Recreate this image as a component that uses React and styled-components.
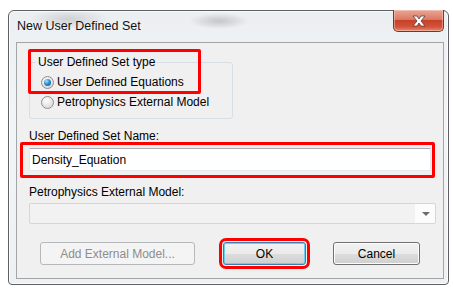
import styled, { createGlobalStyle } from "styled-components";

const GlobalStyle = createGlobalStyle`
  html, body {
    margin: 0;
    background: #ffffff;
    font-family: "Liberation Sans", Arial, sans-serif;
    font-size: 12px;
    color: #000;
  }
`;

const Page = styled.div`
  padding: 10px 0 0 8px;
`;

const Window = styled.div`
  width: 441px;
  height: 275px;
  box-sizing: border-box;
  border: 1px solid #5c5f63;
  border-radius: 6px 6px 4px 4px;
  background:
    radial-gradient(ellipse 40px 10px at 60px 8px, rgba(150,150,150,0.35), transparent),
    radial-gradient(ellipse 30px 8px at 210px 10px, rgba(120,120,120,0.35), transparent),
    linear-gradient(#eceff2, #f3f4f5 40%, #eef0f2);
  display: flex;
  flex-direction: column;
  box-shadow: inset 0 0 0 1px rgba(255,255,255,0.7);
`;

const TitleBar = styled.div`
  height: 31px;
  display: flex;
  justify-content: space-between;
  align-items: flex-start;
`;

const Title = styled.div`
  padding: 8px 0 0 8px;
  font-size: 12.5px;
  line-height: 15px;
  color: #111;
`;

const CloseButton = styled.div`
  width: 51px;
  height: 22px;
  box-sizing: border-box;
  margin: -1px 4px 0 0;
  border: 1px solid #6b3a33;
  border-top: none;
  border-radius: 0 0 5px 5px;
  background: linear-gradient(#e9a596 0%, #dd7a63 45%, #c6412a 50%, #d2523a 80%, #e38a6d 100%);
  box-shadow: inset 0 0 0 1px rgba(255,220,210,0.45);
  display: flex;
  align-items: center;
  justify-content: center;
`;

const Client = styled.div`
  flex: 1;
  margin: 0 4px 5px 7px;
  border: 1px solid #a3a6a9;
  background: #f0f0f0;
  padding-left: 12px;
  position: relative;
`;

const GroupBox = styled.div`
  position: relative;
  margin-top: 19px;
  width: 204px;
  height: 57px;
  box-sizing: border-box;
  border: 1px solid #d5dfe5;
  border-radius: 3px;
  padding: 9px 0 0 11px;
`;

const Legend = styled.span`
  position: absolute;
  top: -8px;
  left: 6px;
  padding: 0 2px;
  background: #f0f0f0;
  line-height: 15px;
`;

const RadioRow = styled.label`
  display: flex;
  align-items: center;
  gap: 3px;
  height: 20px;
`;

const RadioDot = styled.span`
  width: 13px;
  height: 13px;
  box-sizing: border-box;
  border-radius: 50%;
  border: 1px solid #8f8f8f;
  background: radial-gradient(circle at 40% 35%, #ffffff, #e2e2e2 60%, #cfcfcf);
  display: flex;
  align-items: center;
  justify-content: center;

  &::after {
    content: "";
    display: ${(p) => (p.$checked ? "block" : "none")};
    width: 7px;
    height: 7px;
    border-radius: 50%;
    background: radial-gradient(circle at 35% 30%, #aee3ff, #2f8fd1 45%, #0e4e8c);
  }
`;

const FieldLabel = styled.div`
  line-height: 15px;
  margin-top: ${(p) => p.$top}px;
`;

const TextBox = styled.div`
  position: relative;
  margin-top: 4px;
  width: 402px;
  height: 23px;
  box-sizing: border-box;
  background: #fff;
  border: 1px solid #e3e9ef;
  border-top-color: #abadb3;
  padding-left: 2px;
  display: flex;
  align-items: center;
`;

const Combo = styled.div`
  margin-top: 3px;
  width: 407px;
  height: 21px;
  box-sizing: border-box;
  border: 1px solid #d6d6d6;
  border-radius: 2px;
  background: linear-gradient(90deg, #f2f2f2 0 385px, #fcfcfc 385px);
  display: flex;
  justify-content: flex-end;
  align-items: center;
  padding-right: 5px;
`;

const Arrow = styled.span`
  width: 0;
  height: 0;
  border-left: 4px solid transparent;
  border-right: 4px solid transparent;
  border-top: 4px solid #6d6d6d;
`;

const ButtonRow = styled.div`
  display: flex;
  align-items: flex-start;
  margin: 18px 0 0 11px;
`;

const Button = styled.div`
  width: ${(p) => p.$w}px;
  margin-left: ${(p) => p.$gap || 0}px;
  height: 23px;
  box-sizing: border-box;
  border-radius: 3px;
  display: flex;
  align-items: center;
  justify-content: center;
  border: 1px solid ${(p) => (p.$disabled ? "#b5b9bc" : p.$default ? "#3c7fb1" : "#707070")};
  color: ${(p) => (p.$disabled ? "#8d8d8d" : "#000")};
  background: ${(p) =>
    p.$disabled
      ? "#f4f4f4"
      : "linear-gradient(#f2f2f2 0%, #ebebeb 50%, #dddddd 51%, #cfcfcf 100%)"};
  box-shadow: ${(p) =>
    p.$default ? "inset 0 0 0 1px #6ad0f0" : p.$disabled ? "none" : "inset 0 0 0 1px #fcfcfc"};
  outline: ${(p) => (p.$highlight ? "3px solid #ff0000" : "none")};
  outline-offset: 1px;
`;

const Highlight = styled.div`
  position: absolute;
  top: ${(p) => p.$t}px;
  left: ${(p) => p.$l}px;
  width: ${(p) => p.$w}px;
  height: ${(p) => p.$h}px;
  box-sizing: border-box;
  border: 3px solid #ff0000;
  border-radius: 2px;
  pointer-events: none;
`;

function CloseGlyph() {
  return (
    <svg width="16" height="12" viewBox="0 0 16 12">
      <path
        d="M2 1 H6 L8 4 L10 1 H14 L10 6 L14 11 H10 L8 8 L6 11 H2 L6 6 Z"
        fill="#ffffff"
        stroke="#5a3a36"
        strokeWidth="0.8"
        strokeLinejoin="round"
      />
    </svg>
  );
}

export default function App() {
  return (
    <>
      <GlobalStyle />
      <Page>
        <Window>
          <TitleBar>
            <Title>New User Defined Set</Title>
            <CloseButton>
              <CloseGlyph />
            </CloseButton>
          </TitleBar>
          <Client>
            <GroupBox>
              <Legend>User Defined Set type</Legend>
              <RadioRow>
                <RadioDot $checked />
                User Defined Equations
              </RadioRow>
              <RadioRow>
                <RadioDot />
                Petrophysics External Model
              </RadioRow>
              <Highlight $t={-14} $l={-2} $w={173} $h={45} />
            </GroupBox>
            <FieldLabel $top={10}>User Defined Set Name:</FieldLabel>
            <TextBox>
              Density_Equation
              <Highlight $t={-7} $l={-10} $w={415} $h={36} />
            </TextBox>
            <FieldLabel $top={14}>Petrophysics External Model:</FieldLabel>
            <Combo>
              <Arrow />
            </Combo>
            <ButtonRow>
              <Button $w={155} $disabled>Add External Model...</Button>
              <Button $w={83} $gap={28} $default $highlight>OK</Button>
              <Button $w={87} $gap={27}>Cancel</Button>
            </ButtonRow>
          </Client>
        </Window>
      </Page>
    </>
  );
}
